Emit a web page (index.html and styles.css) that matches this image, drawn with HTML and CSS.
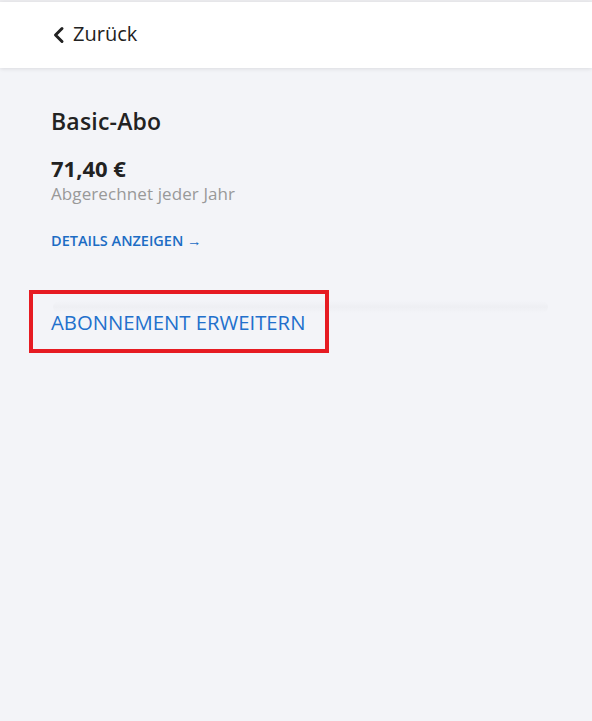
FILE: index.html
```html
<!DOCTYPE html>
<html lang="de">
<head>
<meta charset="utf-8">
<title>Basic-Abo</title>
<link rel="stylesheet" href="styles.css">
</head>
<body>
<div class="topline"></div>
<header class="header">
  <a class="back" href="#">
    <svg class="chev" width="13" height="18" viewBox="0 0 13 18"><polyline points="10,2.5 3.5,9 10,15.5" fill="none" stroke="#222" stroke-width="3" stroke-linecap="round" stroke-linejoin="round"/></svg>
    <span>Zurück</span>
  </a>
</header>
<main class="content">
  <h1 class="title">Basic-Abo</h1>
  <div class="price">71,40 €</div>
  <div class="billing">Abgerechnet jeder Jahr</div>
  <a class="details" href="#">DETAILS ANZEIGEN →</a>
  <div class="upgrade-row">
    <div class="shade"></div>
    <a class="upgrade" href="#">ABONNEMENT ERWEITERN</a>
  </div>
</main>
</body>
</html>
```
FILE: styles.css
```css
html, body {
  margin: 0;
  padding: 0;
  background: #f3f4f8;
  font-family: "Open Sans", "Noto Sans", sans-serif;
  height: 100%;
}
.topline {
  height: 2px;
  background: #ececef;
}
.header {
  height: 66px;
  background: #fff;
  box-shadow: 0 1px 4px rgba(0,0,0,0.10);
  display: flex;
  align-items: center;
  padding-left: 52px;
}
.back {
  display: flex;
  align-items: center;
  gap: 8px;
  color: #222;
  text-decoration: none;
  font-size: 20px;
  line-height: 1;
}
.back span { position: relative; top: -1px; }
.chev { display: block; }
.content {
  padding: 0 44px 0 51px;
}
.title {
  margin: 0;
  padding-top: 39px;
  font-size: 23px;
  font-weight: 600;
  color: #222;
  line-height: 28px;
  letter-spacing: 0.2px;
}
.price {
  margin-top: 19px;
  font-size: 22px;
  font-weight: 700;
  color: #222;
  line-height: 28px;
}
.billing {
  margin-top: 1px;
  font-size: 17px;
  color: #999;
  line-height: 22px;
  letter-spacing: 0.1px;
}
.details {
  display: inline-block;
  margin-top: 26px;
  font-size: 14.5px;
  font-weight: 600;
  color: #1c6cc4;
  text-decoration: none;
  line-height: 20px;
}
.upgrade-row {
  position: relative;
  margin-top: 39px;
  height: 60px;
}
.shade {
  position: absolute;
  left: 2px;
  right: 0;
  top: 11px;
  height: 12px;
  border-radius: 6px;
  background: linear-gradient(#f3f4f8, #eeeff3, #f3f4f8);
}
.upgrade {
  position: absolute;
  left: -22px;
  top: 0;
  width: 274px;
  height: 55px;
  border: 4px solid #e61b22;
  display: flex;
  align-items: center;
  padding-left: 18px;
  font-size: 20.3px;
  color: #2270cc;
  text-decoration: none;
  box-sizing: content-box;
}
```
